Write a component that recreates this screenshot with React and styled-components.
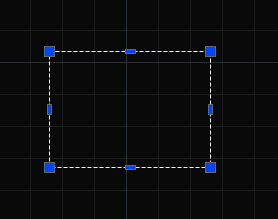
import React from "react";
import styled, { createGlobalStyle } from "styled-components";

const GlobalStyle = createGlobalStyle`
  html, body { margin: 0; padding: 0; background: #090909; overflow: hidden; }
`;

const Canvas = styled.div`
  position: relative;
  width: 278px;
  height: 219px;
  background-color: #090909;
  background-image:
    linear-gradient(to right, #2a3039 1px, transparent 1px),
    linear-gradient(to bottom, #2a3039 1px, transparent 1px),
    linear-gradient(to right, #1c1c1e 1px, transparent 1px),
    linear-gradient(to bottom, #1c1c1e 1px, transparent 1px);
  background-size: 1px 100%, 100% 1px, 32px 32px, 32px 32px;
  background-position: 126px 0, 0 62px, 30px 30px, 30px 30px;
  background-repeat: no-repeat, no-repeat, repeat, repeat;
`;

const Selection = styled.div`
  position: absolute;
  left: 49px;
  top: 51px;
  width: 162px;
  height: 117px;
`;

const Outline = styled.svg`
  position: absolute;
  left: 0;
  top: 0;
  overflow: visible;
`;

const Handle = styled.div`
  position: absolute;
  box-sizing: border-box;
  left: ${p => p.x}px;
  top: ${p => p.y}px;
  width: ${p => p.w}px;
  height: ${p => p.h}px;
  background: #0046ff;
  border: 1px solid #676767;
`;

const handles = [
  { x: -5, y: -5, w: 11, h: 11 },
  { x: 156, y: -5, w: 11, h: 11 },
  { x: -5, y: 111, w: 11, h: 11 },
  { x: 156, y: 111, w: 11, h: 11 },
  { x: 76, y: -2, w: 11, h: 5 },
  { x: 76, y: 114, w: 11, h: 5 },
  { x: -2, y: 53, w: 5, h: 11 },
  { x: 159, y: 53, w: 5, h: 11 },
];

export default function App() {
  return (
    <>
      <GlobalStyle />
      <Canvas>
        <Selection>
          <Outline width="162" height="117">
            <rect x="0.5" y="0.5" width="161" height="116" fill="none"
              stroke="#ffffff" strokeWidth="1" strokeDasharray="4 2" />
          </Outline>
          {handles.map((h, i) => (
            <Handle key={i} {...h} />
          ))}
        </Selection>
      </Canvas>
    </>
  );
}
